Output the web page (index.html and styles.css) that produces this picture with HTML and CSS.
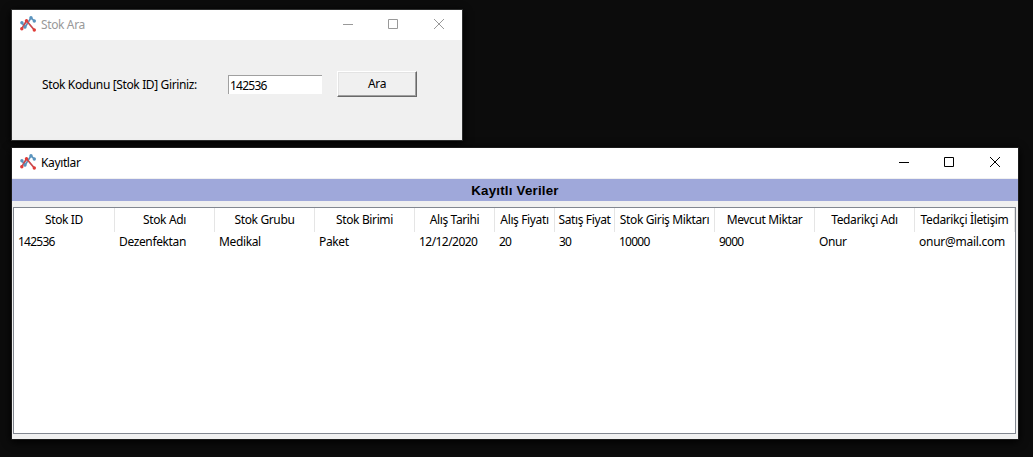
FILE: index.html
```html
<!DOCTYPE html>
<html lang="tr">
<head>
<meta charset="utf-8">
<title>Stok Ara</title>
<link rel="stylesheet" href="styles.css">
</head>
<body>
<svg class="defs" width="0" height="0">
  <symbol id="logo" viewBox="0 0 16 16">
    <g fill="none" stroke-width="1.7">
      <path stroke="#5a93bd" d="M2 6.8L5 11.2L11 1.8L14.4 5"/>
      <path stroke="#c9484c" d="M1.8 12.8L6.5 4.7L14.3 14"/>
    </g>
    <g fill="#5a93bd"><circle cx="1.9" cy="6.8" r="1.7"/><circle cx="5" cy="11" r="1.7"/><circle cx="11" cy="1.8" r="1.7"/><circle cx="14.3" cy="5" r="1.7"/></g>
    <g fill="#e03c38"><circle cx="1.8" cy="12.8" r="1.7"/><circle cx="6.5" cy="4.7" r="1.7"/><circle cx="14.3" cy="14" r="1.7"/></g>
  </symbol>
  <symbol id="controls" viewBox="0 0 102 12">
    <g fill="none" stroke="currentColor">
      <path d="M0 5.5H10"/>
      <path d="M45.5 .5H54.5V9.5H45.5Z"/>
      <path d="M91 0L101 10M101 0L91 10"/>
    </g>
  </symbol>
</svg>
<main class="desktop">
  <section class="window search">
    <header class="titlebar inactive">
      <svg class="logo"><use href="#logo"/></svg>
      <span class="title">Stok Ara</span>
      <svg class="controls"><use href="#controls"/></svg>
    </header>
    <form class="form">
      <label class="label" for="code">Stok Kodunu [Stok ID] Giriniz:</label>
      <input class="entry" id="code" type="text" value="142536">
      <button class="button" type="button">Ara</button>
    </form>
  </section>
  <section class="window records">
    <header class="titlebar">
      <svg class="logo"><use href="#logo"/></svg>
      <span class="title">Kayıtlar</span>
      <svg class="controls"><use href="#controls"/></svg>
    </header>
    <h1 class="banner">Kayıtlı Veriler</h1>
    <div class="tree">
      <div class="row head">
        <span>Stok ID</span><span>Stok Adı</span><span>Stok Grubu</span><span>Stok Birimi</span><span>Alış Tarihi</span><span>Alış Fiyatı</span><span>Satış Fiyat</span><span>Stok Giriş Miktarı</span><span>Mevcut Miktar</span><span>Tedarikçi Adı</span><span>Tedarikçi İletişim</span>
      </div>
      <div class="row data">
        <span class="number">142536</span><span>Dezenfektan</span><span>Medikal</span><span>Paket</span><span class="date">12/12/2020</span><span class="number">20</span><span class="number">30</span><span class="number">10000</span><span class="number">9000</span><span>Onur</span><span class="mail">onur@mail.com</span>
      </div>
    </div>
  </section>
</main>
</body>
</html>
```
FILE: styles.css
```css
* { box-sizing: border-box; }
body {
  margin: 0;
  background: #0c0c0c;
  color: #000;
  font: 12px/16px "Noto Sans", "Open Sans", sans-serif;
  letter-spacing: -0.37px;
}
.defs { display: none; }
.desktop {
  display: flex;
  flex-direction: column;
  align-items: flex-start;
  gap: 6px;
  height: 457px;
  padding: 9px 0 0 11px;
  overflow: hidden;
}
.window {
  display: flex;
  flex-direction: column;
  border: 1px solid #2d2e2e;
  background: #f0f0f0;
  box-shadow: 0 2px 8px #000;
}
.search { width: 452px; height: 132px; }
.records { width: 1008px; height: 293px; border-color: #1b1b1b; }
.titlebar {
  display: flex;
  flex: none;
  align-items: center;
  height: 30px;
  padding: 0 17px 0 8px;
  background: #fff;
}
.inactive { color: #999; }
.logo { width: 16px; height: 16px; margin-top: -2px; }
.title { margin-left: 5px; }
.controls { width: 102px; height: 12px; margin-left: auto; }
.form { display: flex; align-items: flex-start; padding: 31px 0 0 30px; }
.label { width: 186px; padding-top: 6px; white-space: nowrap; }
.entry {
  width: 94px;
  height: 19px;
  margin: 4px 15px 0 0;
  padding: 0 0 0 1px;
  border: solid #a0a0a0;
  border-width: 1px 0 0 1px;
  background: #fff;
  font: inherit;
  letter-spacing: -0.75px;
}
.button {
  width: 80px;
  height: 26px;
  padding: 0;
  border: 1px solid;
  border-color: #fff #696969 #696969 #fff;
  background: #f0f0f0;
  box-shadow: inset -1px -1px #a0a0a0, inset 1px 1px #e3e3e3;
  color: #000;
  font: inherit;
  letter-spacing: inherit;
}
.banner {
  height: 22px;
  margin: 1px 0 6px;
  background: #9fa8da;
  font: bold 13.33px/24px "Liberation Sans", Arial, sans-serif;
  letter-spacing: 0.2px;
  text-align: center;
}
.tree {
  width: 1003px;
  height: 227px;
  margin-left: 1px;
  border: 1px solid #828790;
  background: #fff;
}
.row {
  display: grid;
  grid-template-columns: 101px 100px 100px 100px 80px 60px 60px 100px 100px 100px 100px;
  white-space: nowrap;
}
.head { height: 24px; line-height: 24px; text-align: center; }
.head span { border-right: 1px solid #e5e5e5; }
.data { height: 20px; line-height: 20px; }
.data span { padding-left: 4px; }
.data .number { letter-spacing: -0.75px; }
.data .date { letter-spacing: -0.55px; }
.data .mail { letter-spacing: -0.27px; }
```
